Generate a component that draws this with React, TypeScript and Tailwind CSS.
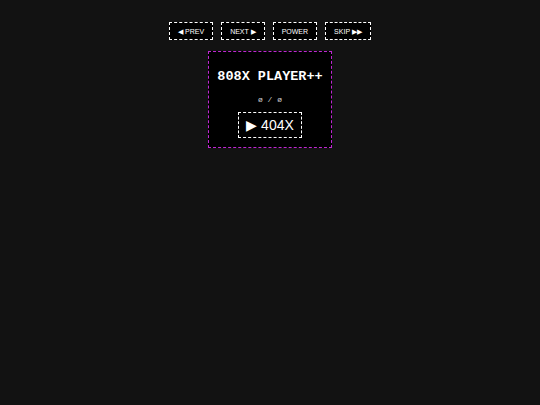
import React from 'react';

const NAV = ['◀ PREV', 'NEXT ▶', 'POWER', 'SKIP ▶▶'];

export default function App() {
  return (
    <div className="min-h-[405px] w-full bg-[#121212] flex flex-col items-center pt-[22px] font-['Liberation_Sans',Arial,sans-serif]">
      <div className="flex gap-[8px]">
        {NAV.map(n => (
          <button key={n}
            className="h-[18px] px-[8px] bg-black text-white border border-dashed border-white text-[7px] leading-none">
            {n}
          </button>
        ))}
      </div>

      <div className="mt-[11px] w-[124px] h-[97px] bg-black border border-dashed border-[#c026d3] flex flex-col items-center font-['Liberation_Mono','Courier_New',monospace]">
        <div className="mt-[18px] text-white font-bold text-[13.5px] leading-none">
          808X PLAYER++
        </div>
        <div className="mt-[12px] text-[#cccccc] text-[8px] leading-none">
          ø / ø
        </div>
        <button className="mt-[8px] w-[64px] h-[26px] border border-dashed border-white text-white text-[14px] leading-none flex items-center justify-center font-['Liberation_Sans',Arial,sans-serif]">
          ▶ 404X
        </button>
      </div>
    </div>
  );
}
